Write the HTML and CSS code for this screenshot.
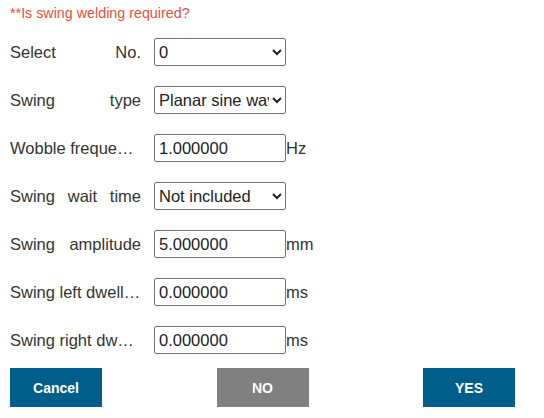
FILE: index.html
```html
<!DOCTYPE html>
<html>
<head>
<meta charset="utf-8">
<link rel="stylesheet" href="styles.css">
</head>
<body>
<div class="page">
  <div class="note">**Is swing welding required?</div>
  <div class="form">
    <div class="row">
      <label class="label">Select No.</label>
      <select class="control"><option>0</option></select>
    </div>
    <div class="row">
      <label class="label">Swing type</label>
      <select class="control"><option>Planar sine wave</option></select>
    </div>
    <div class="row">
      <label class="label">Wobble frequency</label>
      <input class="control" type="text" value="1.000000">
      <span class="unit">Hz</span>
    </div>
    <div class="row">
      <label class="label">Swing wait time</label>
      <select class="control"><option>Not included</option></select>
    </div>
    <div class="row">
      <label class="label">Swing amplitude</label>
      <input class="control" type="text" value="5.000000">
      <span class="unit">mm</span>
    </div>
    <div class="row">
      <label class="label">Swing left dwell time</label>
      <input class="control" type="text" value="0.000000">
      <span class="unit">ms</span>
    </div>
    <div class="row">
      <label class="label">Swing right dwell time</label>
      <input class="control" type="text" value="0.000000">
      <span class="unit">ms</span>
    </div>
  </div>
  <div class="actions">
    <button class="btn btn-blue">Cancel</button>
    <button class="btn btn-gray">NO</button>
    <button class="btn btn-blue">YES</button>
  </div>
</div>
</body>
</html>
```

FILE: styles.css
```css
html, body {
  margin: 0;
  padding: 0;
  background: #ffffff;
}
.page {
  width: 505px;
  padding: 3px 10px 0 10px;
  font-family: "Liberation Sans", Arial, sans-serif;
  color: #333333;
}
.note {
  font-size: 14.3px;
  line-height: 20px;
  color: #e8503a;
}
.form {
  margin-top: 15px;
  display: flex;
  flex-direction: column;
  gap: 20px;
}
.row {
  display: flex;
  align-items: center;
  height: 28px;
}
.label {
  width: 131px;
  margin-right: 13px;
  font-size: 16.5px;
  white-space: nowrap;
  overflow: hidden;
  text-overflow: ellipsis;
  text-align: justify;
  text-align-last: justify;
  flex-shrink: 0;
}
.control {
  box-sizing: border-box;
  width: 132px;
  height: 28px;
  margin: 0;
  border: 1px solid #767676;
  border-radius: 2px;
  background: #ffffff;
  font-family: "Liberation Sans", Arial, sans-serif;
  font-size: 16.5px;
  color: #222222;
  flex-shrink: 0;
}
input.control {
  padding: 0 4px;
}
select.control {
  padding: 0;
}
.unit {
  font-size: 16.5px;
  color: #333333;
}
.actions {
  margin-top: 14px;
  display: flex;
  justify-content: space-between;
}
.btn {
  width: 92px;
  height: 39px;
  border: none;
  margin: 0;
  font-family: "Liberation Sans", Arial, sans-serif;
  font-size: 14px;
  font-weight: bold;
  color: #ffffff;
}
.btn-blue {
  background: #005e8a;
}
.btn-gray {
  background: #808080;
}
```
